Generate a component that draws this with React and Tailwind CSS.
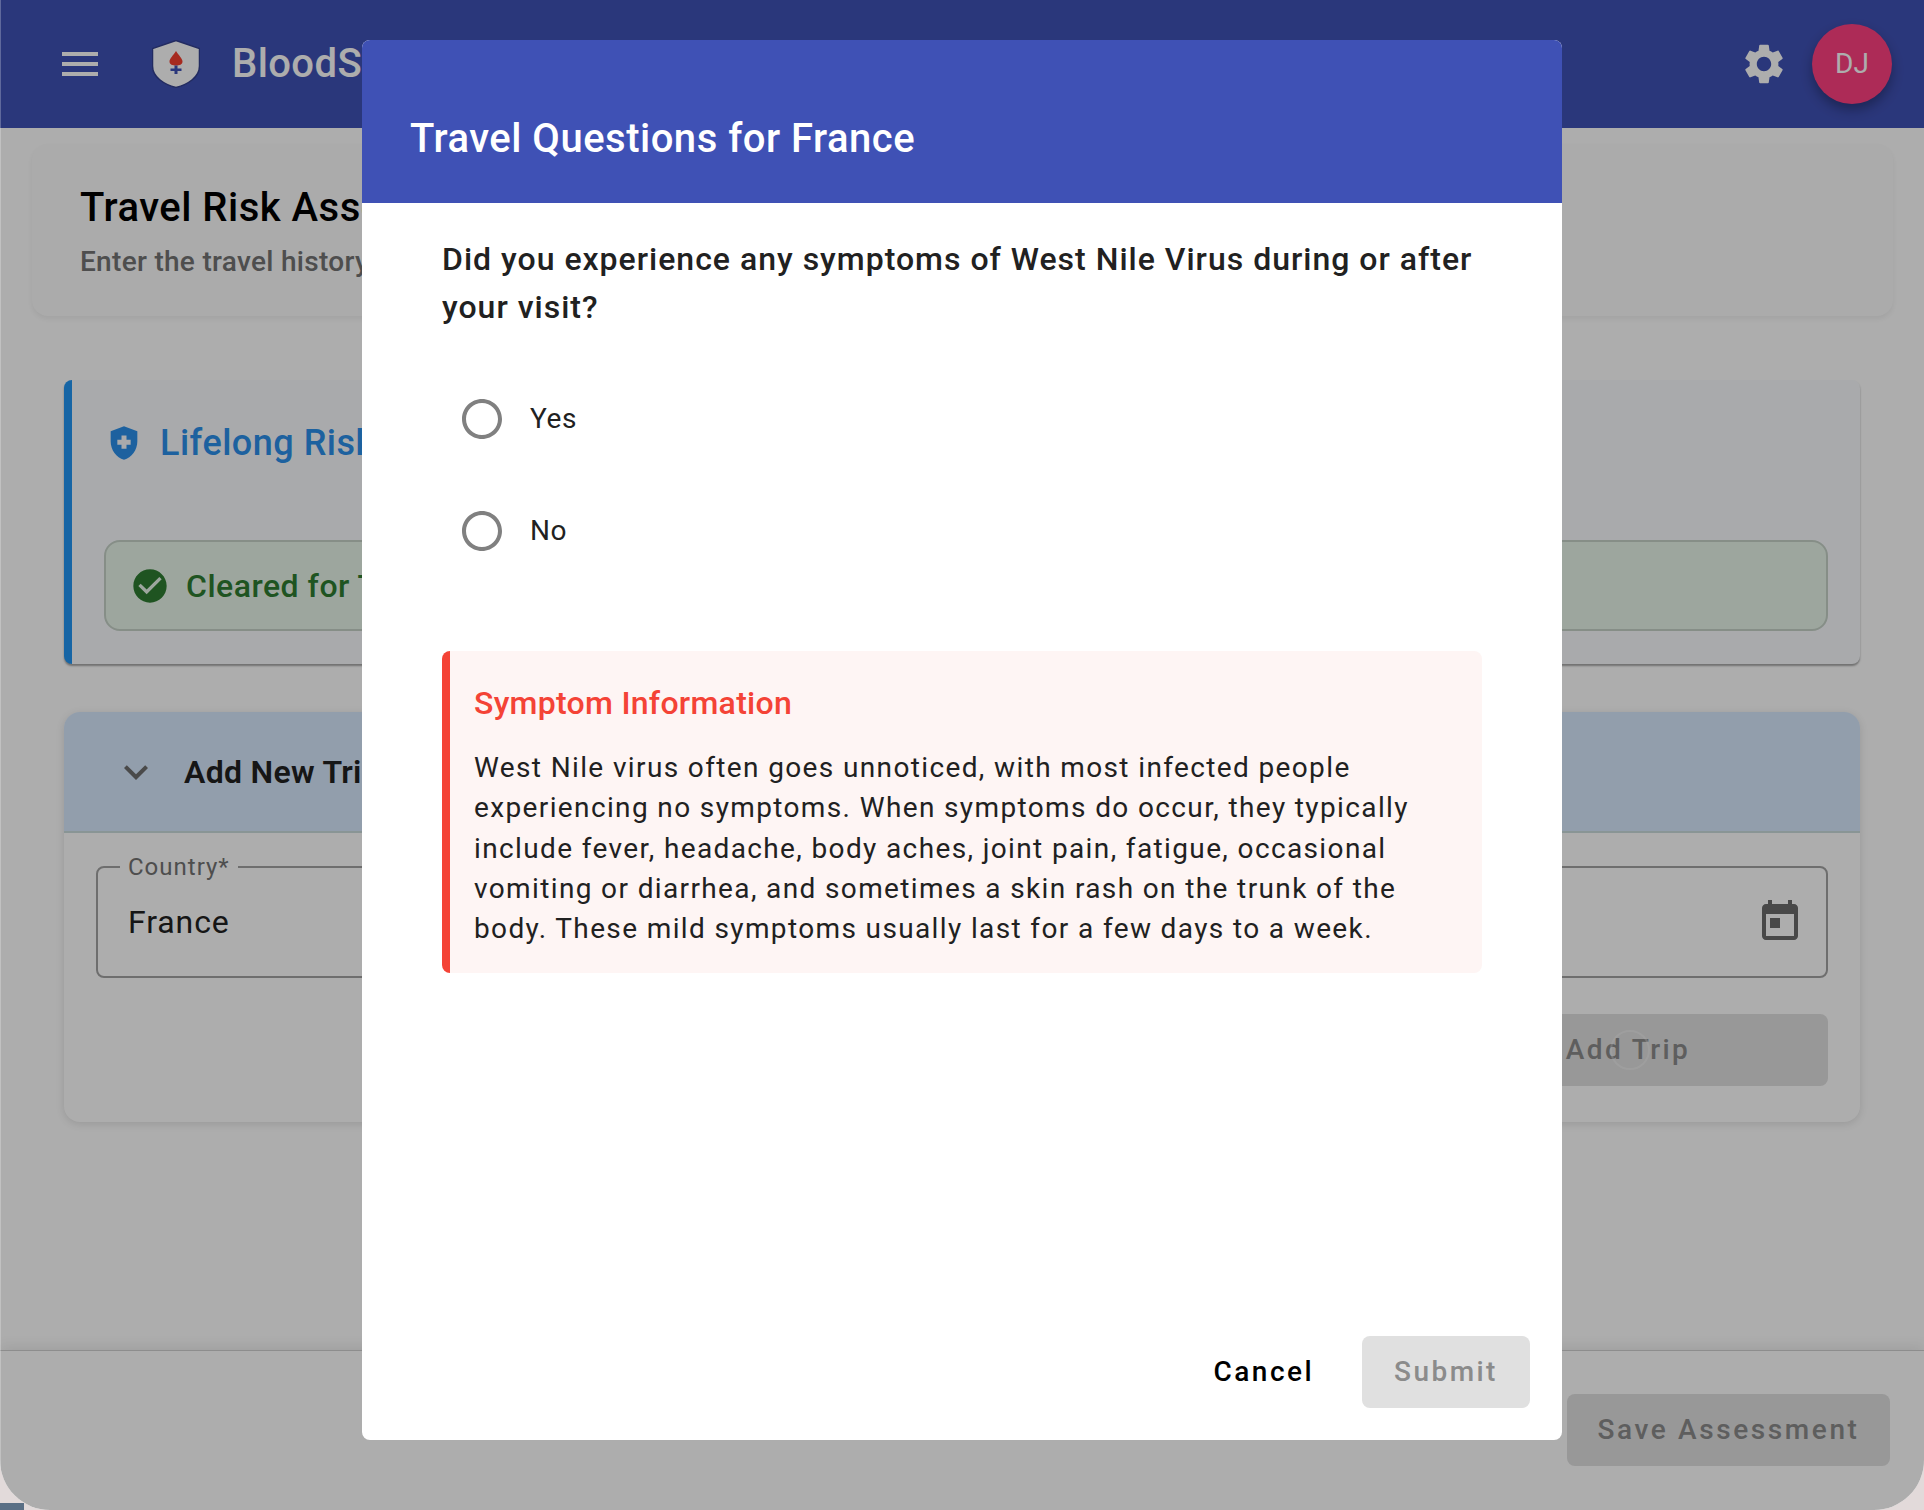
import React from "react";

const Icon = ({ d, className }) => (
  <svg viewBox="0 0 24 24" className={className} fill="currentColor" aria-hidden="true">
    <path d={d} />
  </svg>
);

const P = {
  menu: "M3 18h18v-2H3v2zm0-5h18v-2H3v2zm0-7v2h18V6H3z",
  gear: "M19.14 12.94c.04-.3.06-.61.06-.94 0-.32-.02-.64-.07-.94l2.03-1.58c.18-.14.23-.41.12-.61l-1.92-3.32c-.12-.22-.37-.29-.59-.22l-2.39.96c-.5-.38-1.03-.7-1.62-.94l-.36-2.54c-.04-.24-.24-.41-.48-.41h-3.84c-.24 0-.43.17-.47.41l-.36 2.54c-.59.24-1.13.57-1.62.94l-2.39-.96c-.22-.08-.47 0-.59.22L2.74 8.87c-.12.21-.08.47.12.61l2.03 1.58c-.05.3-.09.63-.09.94s.02.64.07.94l-2.03 1.58c-.18.14-.23.41-.12.61l1.92 3.32c.12.22.37.29.59.22l2.39-.96c.5.38 1.03.7 1.62.94l.36 2.54c.05.24.24.41.48.41h3.84c.24 0 .44-.17.47-.41l.36-2.54c.59-.24 1.13-.56 1.62-.94l2.39.96c.22.08.47 0 .59-.22l1.92-3.32c.12-.22.07-.47-.12-.61l-2.01-1.58zM12 15.6c-1.98 0-3.6-1.62-3.6-3.6s1.62-3.6 3.6-3.6 3.6 1.62 3.6 3.6-1.62 3.6-3.6 3.6z",
  shield: "M10.5 13H8v-3h2.5V7.5h3V10H16v3h-2.5v2.5h-3V13zM12 2 4 5v6.09c0 5.05 3.41 9.76 8 10.91 4.59-1.15 8-5.86 8-10.91V5l-8-3z",
  check: "M12 2C6.48 2 2 6.48 2 12s4.48 10 10 10 10-4.48 10-10S17.52 2 12 2zm-2 15-5-5 1.41-1.41L10 14.17l7.59-7.59L19 8l-9 9z",
  expand: "M16.59 8.59 12 13.17 7.41 8.59 6 10l6 6 6-6z",
  today: "M19 3h-1V1h-2v2H8V1H6v2H5c-1.11 0-1.99.9-1.99 2L3 19c0 1.1.89 2 2 2h14c1.1 0 2-.9 2-2V5c0-1.1-.9-2-2-2zm0 16H5V8h14v11zM7 10h5v5H7z",
  radio: "M12 2C6.48 2 2 6.48 2 12s4.48 10 10 10 10-4.48 10-10S17.52 2 12 2zm0 18c-4.42 0-8-3.58-8-8s3.58-8 8-8 8 3.58 8 8-3.58 8-8 8z",
};

const Logo = () => (
  <svg viewBox="0 0 48 48" className="w-12 h-12 ml-[48px] shrink-0" aria-hidden="true">
    <path d="M24 0.5 L47.5 8.5 V26 C47.5 37 36 44.5 24 47.5 C12 44.5 0.5 37 0.5 26 V8.5 Z" fill="#ffffff" stroke="#33408f" strokeWidth="1.5" />
    <path d="M24 11 C26.5 15 30.5 18.5 30.5 21.5 C30.5 24.5 27.5 25.5 24 25.5 C20.5 25.5 17.5 24.5 17.5 21.5 C17.5 18.5 21.5 15 24 11 Z" fill="#f53f2f" />
    <path d="M22.5 25.5h3v3h4v2.6h-4v3h-3v-3h-4v-2.6h4z" fill="#3f51b5" />
  </svg>
);

const Radio = ({ label }) => (
  <div className="h-[112px] flex items-center pl-4">
    <Icon d={P.radio} className="w-12 h-12 text-[#808080]" />
    <span className="ml-6 text-[28px] leading-[40px] tracking-[0.6px] text-[#212121]">{label}</span>
  </div>
);

export default function App() {
  return (
    <div className="relative w-[1924px] h-[1510px] overflow-hidden bg-[#e2dada]" style={{ fontFamily: "Roboto, sans-serif" }}>
      <div className="absolute left-0 bottom-0 w-[24px] h-[7px] bg-[#5a6f85]" />
      <div className="relative w-full h-full rounded-b-[50px] overflow-hidden bg-white flex flex-col">
        {/* App bar */}
        <header className="h-[128px] shrink-0 bg-[#3f51b5] text-white flex items-center">
          <Icon d={P.menu} className="w-12 h-12 ml-[56px] shrink-0" />
          <Logo />
          <span className="ml-[32px] text-[40px] leading-[48px] font-medium tracking-[0.4px]">BloodSafe</span>
          <div className="ml-auto flex items-center">
            <Icon d={P.gear} className="w-12 h-12" />
            <div className="ml-6 mr-8 w-20 h-20 rounded-full bg-[#ff4081] flex items-center justify-center text-[28px] shadow-[0_6px_12px_rgba(0,0,0,0.3)]">
              DJ
            </div>
          </div>
        </header>

        {/* Main */}
        <main className="flex-1 pt-4 pl-8 pr-[31px]">
          <section className="h-[172px] rounded-[16px] bg-[#fcfcfc] shadow-[0_3px_5px_rgba(0,0,0,0.06)] pl-12 pt-[40px]">
            <h1 className="text-[40px] leading-[48px] font-medium tracking-[0.5px] text-black">Travel Risk Assessment</h1>
            <p className="mt-[10px] text-[28px] leading-[40px] font-medium tracking-[0.3px] text-[#737373]">Enter the travel history for this donor</p>
          </section>

          <div className="mt-16 ml-8 mr-[33px] flex flex-col gap-12">
            <section className="h-[284px] rounded-[8px] border-l-[8px] border-[#2196f3] bg-[#f9fbfe] shadow-[0_2px_2px_rgba(0,0,0,0.35)] pl-8 pr-[32px]">
              <div className="flex items-center pt-[39px] text-[#2c90ea]">
                <Icon d={P.shield} className="w-10 h-10" />
                <h2 className="ml-[16px] text-[36px] leading-[48px] font-medium tracking-[0.5px]">Lifelong Risk Assessment</h2>
              </div>
              <div className="mt-[73px] h-[91px] rounded-[16px] border-2 border-[#c6d2c8] bg-[#e8f5e9] flex items-center pl-[24px] text-[#2e7d32]">
                <Icon d={P.check} className="w-10 h-10" />
                <span className="ml-[16px] text-[32px] font-medium tracking-[0.5px]">Cleared for Travel</span>
              </div>
            </section>

            <section className="h-[410px] rounded-[16px] bg-white shadow-[0_2px_8px_rgba(0,0,0,0.12)] overflow-hidden">
              <div className="h-[121px] bg-[#d8e9fe] border-b-2 border-[#cbdcdc] flex items-center pl-12">
                <Icon d={P.expand} className="w-12 h-12 text-[#6e6e6e]" />
                <h3 className="ml-6 text-[32px] font-semibold tracking-[0.3px] text-[#212121]">Add New Trip</h3>
              </div>
              <div className="pt-[33px] pl-[32px] pr-[32px]">
                <div className="grid grid-cols-2 gap-8">
                  <div className="relative h-[112px] rounded-[8px] border-2 border-[#a3a3a3] flex items-center pl-[30px] text-[32px] text-[#212121] tracking-[0.9px]">
                    <span className="absolute left-[22px] -top-[17px] bg-white px-[8px] text-[24px] leading-[32px] text-[#737373] tracking-[1px]">Country*</span>
                    France
                  </div>
                  <div className="h-[112px] rounded-[8px] border-2 border-[#a3a3a3] flex items-center justify-end pr-[22px] text-[#6a6a6a]">
                    <Icon d={P.today} className="w-12 h-12" />
                  </div>
                </div>
                <div className="mt-[36px] flex justify-end">
                  <button className="relative w-[400px] h-[72px] rounded-[8px] bg-[#e0e0e0] text-[28px] font-medium tracking-[2.4px] text-[#8b8b8b]">
                    Add Trip
                    <span className="absolute left-1/2 top-1/2 -ml-[18px] -mt-[20px] w-10 h-10 rounded-full border-2 border-[rgba(255,255,255,0.3)]" />
                  </button>
                </div>
              </div>
            </section>
          </div>
        </main>

        {/* Footer */}
        <footer className="h-[160px] shrink-0 bg-white border-t border-[#d0d0d0] shadow-[0_-4px_12px_rgba(0,0,0,0.08)] flex justify-end pt-[43px] pr-[34px]">
          <button className="w-[323px] h-[72px] rounded-[8px] bg-[#e0e0e0] text-[28px] font-medium tracking-[2.6px] text-[#8b8b8b]">
            Save Assessment
          </button>
        </footer>

        {/* Backdrop + dialog */}
        <div className="absolute inset-0 bg-[rgba(0,0,0,0.32)] flex justify-center items-start pt-10">
          <div className="w-[1200px] h-[1400px] rounded-[8px] bg-white overflow-hidden flex flex-col">
            <div className="bg-[#3f51b5] pl-12 pt-[69px] pb-[34px] text-[40px] leading-[60px] font-medium tracking-[0.5px] text-white">
              Travel Questions for France
            </div>
            <div className="flex-1 px-20 pt-8">
              <p className="text-[32px] leading-[48px] font-medium tracking-[1px] text-[#212121]">
                Did you experience any symptoms of West Nile Virus during or after your visit?
              </p>
              <div className="mt-8">
                <Radio label="Yes" />
                <Radio label="No" />
              </div>
              <div className="mt-16 h-[322px] rounded-[8px] border-l-[8px] border-[#f44336] bg-[#fef5f4] pl-6 pr-8 pt-7">
                <h4 className="text-[32px] leading-[48px] font-medium tracking-[0.28px] text-[#f44336]">Symptom Information</h4>
                <p className="mt-[21px] text-[28px] leading-[40.3px] tracking-[1.37px] text-[#212121]">
                  West Nile virus often goes unnoticed, with most infected people experiencing no symptoms. When symptoms do occur, they typically include fever, headache, body aches, joint pain, fatigue, occasional vomiting or diarrhea, and sometimes a skin rash on the trunk of the body. These mild symptoms usually last for a few days to a week.
                </p>
              </div>
            </div>
            <div className="flex justify-end items-center gap-[32px] pr-8 pb-8">
              <button className="px-4 h-[72px] text-[28px] font-medium tracking-[2.45px] text-black">Cancel</button>
              <button className="w-[168px] h-[72px] rounded-[8px] bg-[#e0e0e0] text-[28px] font-medium tracking-[2.45px] text-[#8b8b8b]">Submit</button>
            </div>
          </div>
        </div>
        <div className="absolute left-0 top-0 bottom-0 w-px bg-[rgba(255,255,255,0.25)]" />
      </div>
    </div>
  );
}
